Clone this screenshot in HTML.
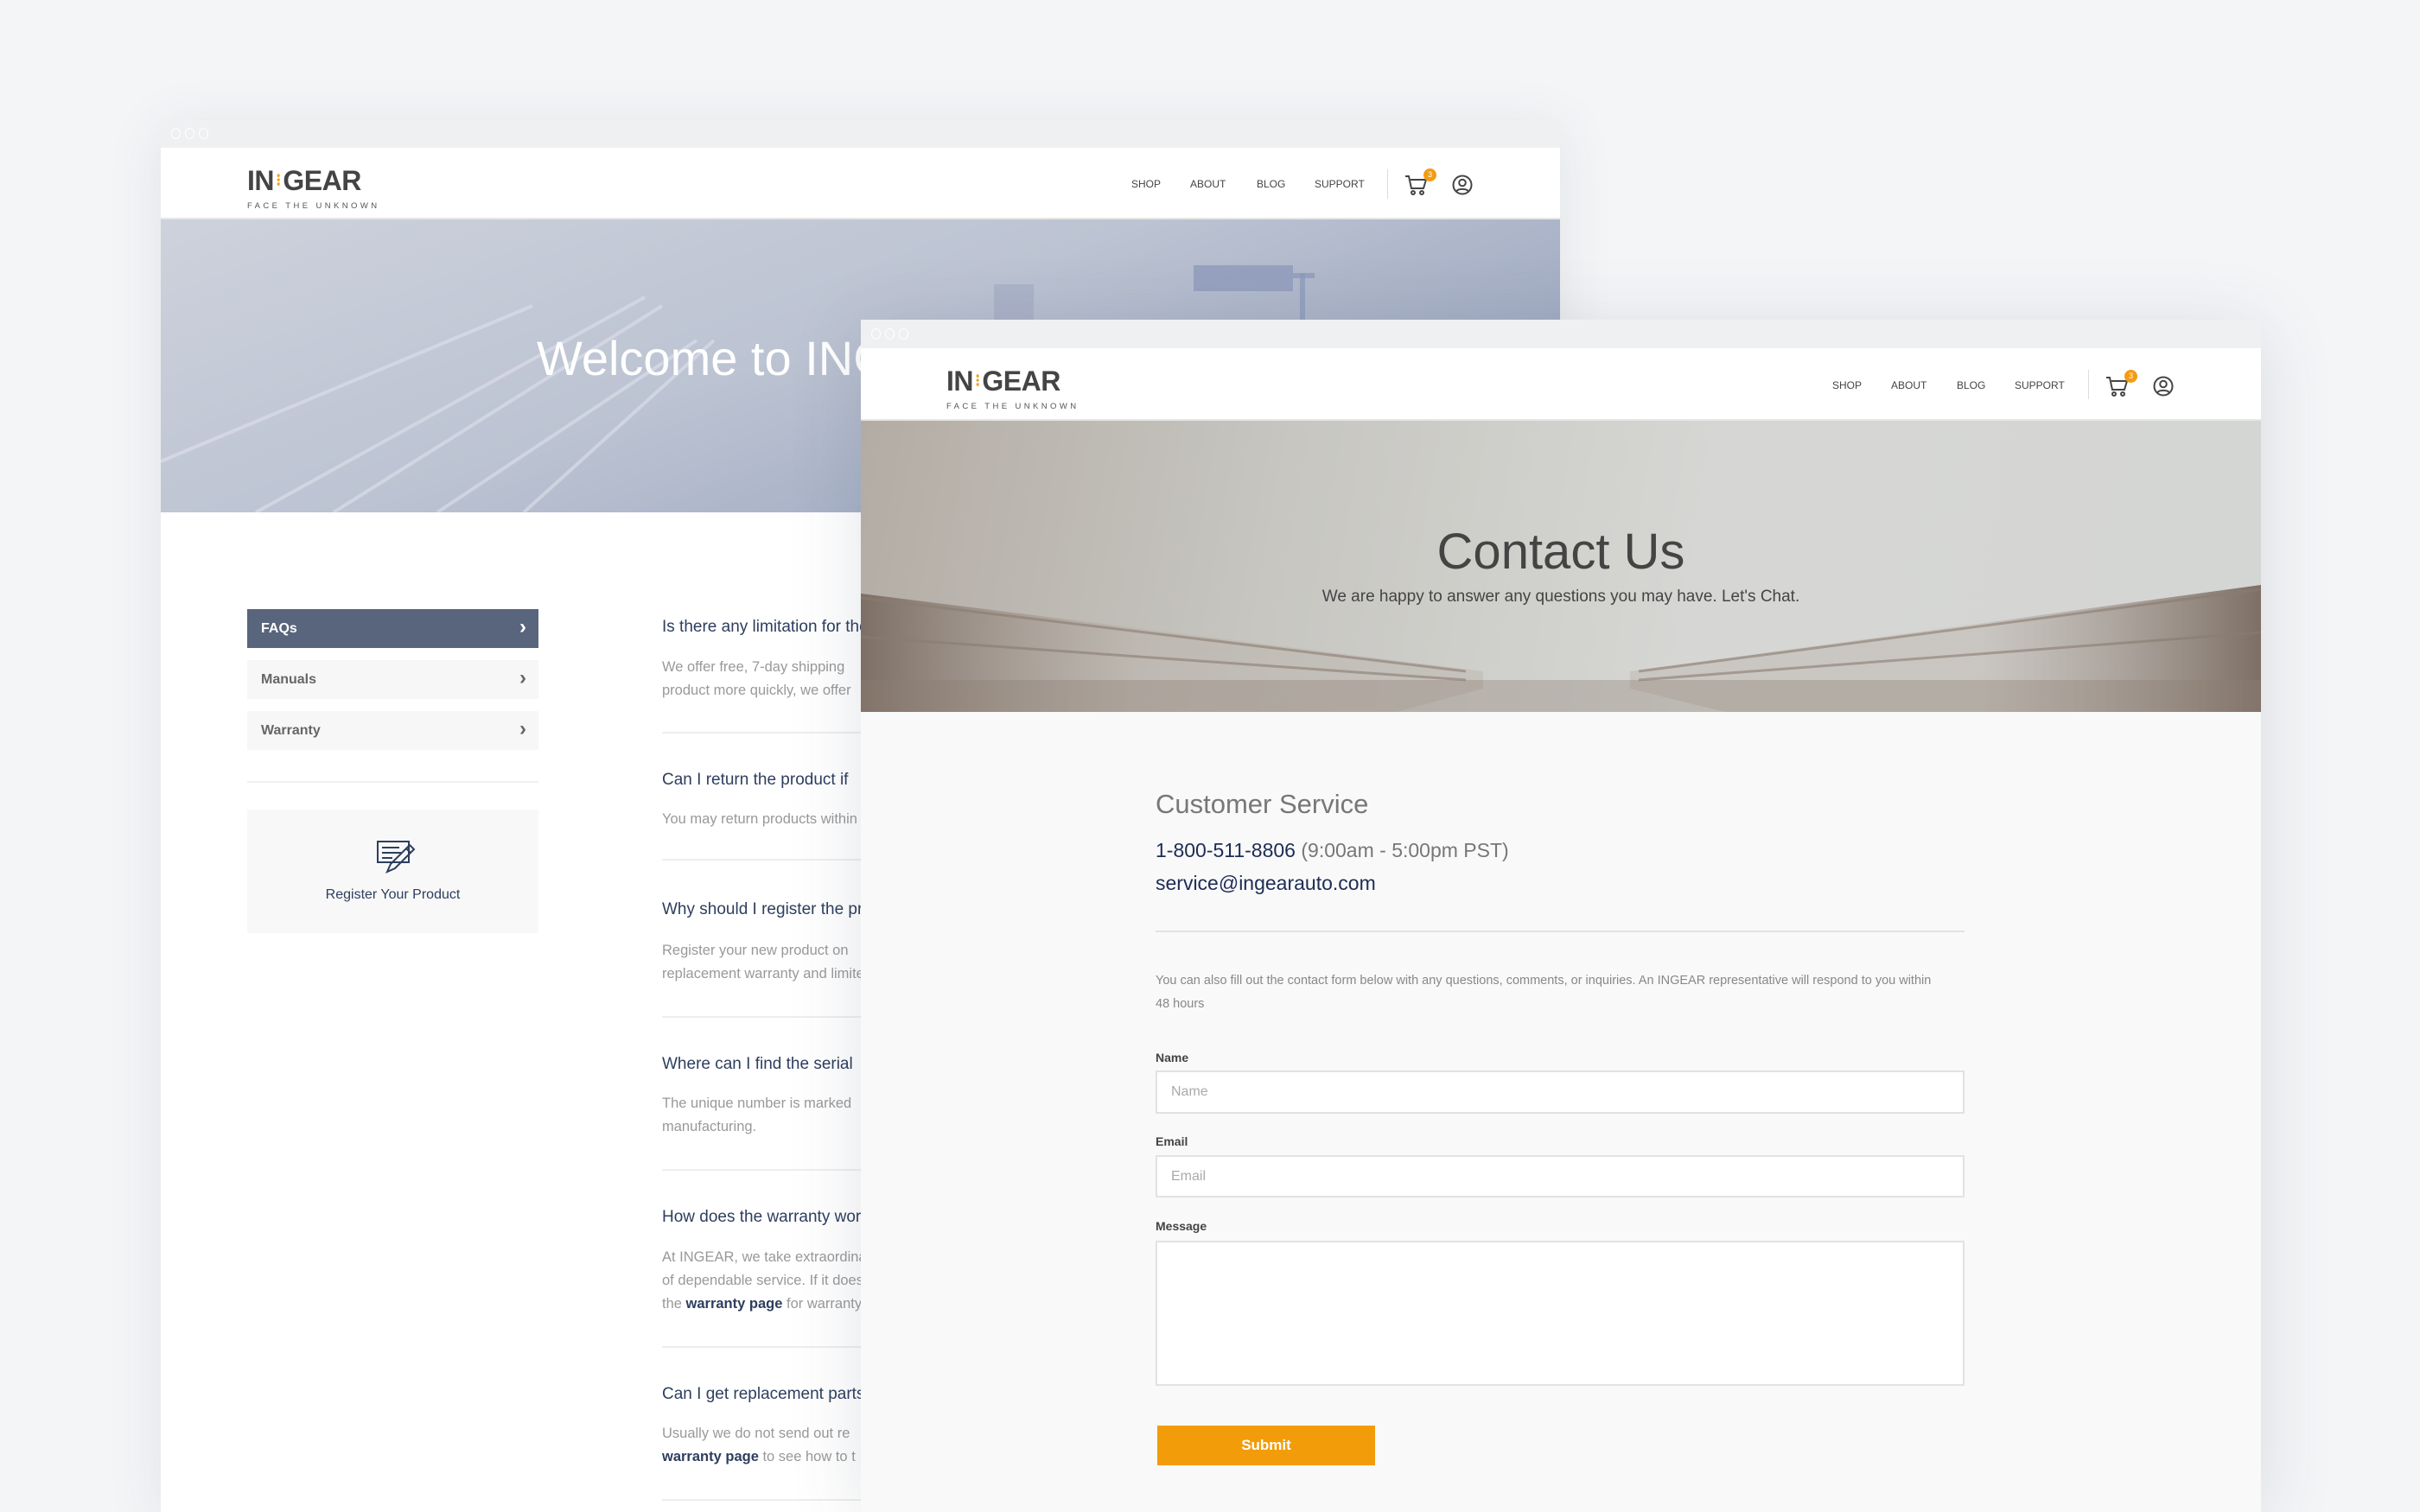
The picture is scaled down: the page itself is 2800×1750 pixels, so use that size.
<!DOCTYPE html>
<html><head><meta charset="utf-8">
<style>
*{margin:0;padding:0;box-sizing:border-box}
body{width:2800px;height:1750px;background:#f4f5f7;font-family:"Liberation Sans",sans-serif;position:relative;overflow:hidden}
.win{position:absolute;background:#fff;box-shadow:0 10px 60px rgba(60,70,90,.10)}
.bar{position:absolute;left:0;right:0;top:0;background:#eff0f2}
.dots{position:absolute;left:12px;display:flex;gap:5px}
.dots i{width:11px;height:13px;border:1.5px solid #fff;border-radius:50%;display:block}
.hdr{position:absolute;left:0;right:0;background:#fff;border-bottom:2px solid #e6e6e6}
.logo{position:absolute;color:#444}
.logo .big{font-weight:bold;font-size:32px;letter-spacing:-0.5px;line-height:32px;white-space:nowrap}
.logo .big b{color:#f39c12;font-size:20px;letter-spacing:0;position:relative;top:-5px;margin:0 2px}
.logo .sm{font-size:9.5px;letter-spacing:3.4px;color:#555;margin-top:3px;white-space:nowrap}
.nav{position:absolute;font-size:12px;color:#444;white-space:nowrap}
.nav span{position:absolute;top:0}
.vdiv{position:absolute;width:1px;height:34px;background:#ddd}
.badge{position:absolute;width:15px;height:15px;border-radius:50%;background:#f39c12;color:#fff;font-size:9px;text-align:center;line-height:15px}
.side{position:absolute;left:100px;width:337px;height:45px;background:#f7f7f7;font-size:16px;color:#666;font-weight:bold;padding-left:16px;line-height:45px}
.side::after{content:"›";position:absolute;right:14px;top:-2px;font-size:24px;font-weight:bold}
.q{position:absolute;left:580px;font-size:19px;color:#2d3e5e;white-space:nowrap}
.a{position:absolute;left:580px;font-size:16.5px;color:#999;line-height:27px;white-space:nowrap}
.a em{font-style:normal;color:#2d3e5e;font-weight:bold}
.hr{position:absolute;left:580px;width:300px;height:2px;background:#eee}
.lbl{position:absolute;left:341px;font-size:14px;font-weight:bold;color:#444}
.inp{position:absolute;left:341px;width:936px;background:#fff;border:2px solid #e2e2e2;font-size:16px;color:#aaa;padding-left:16px}
</style></head><body>

<!-- WINDOW 1 -->
<div class="win" style="left:186px;top:139px;width:1619px;height:1611px">
  <div class="bar" style="height:32px"><div class="dots" style="top:9px"><i></i><i></i><i></i></div></div>
  <div class="hdr" style="top:32px;height:83px">
    <div class="logo" style="left:100px;top:22px"><div class="big">IN<b>⁝</b>GEAR</div><div class="sm">FACE THE UNKNOWN</div></div>
    <div class="nav" style="left:1123px;top:35px;width:300px">
      <span style="left:0">SHOP</span><span style="left:68px">ABOUT</span><span style="left:145px">BLOG</span><span style="left:212px">SUPPORT</span>
    </div>
    <div class="vdiv" style="left:1419px;top:25px"></div>
    <svg style="position:absolute;left:1439px;top:30px" width="28" height="26" viewBox="0 0 28 26" fill="none" stroke="#444" stroke-width="2"><path d="M1 3h4l3 14h14l3-10H7"/><circle cx="10" cy="22" r="2"/><circle cx="20" cy="22" r="2"/></svg>
    <div class="badge" style="left:1461px;top:24px">3</div>
    <svg style="position:absolute;left:1494px;top:31px" width="24" height="24" viewBox="0 0 24 24" fill="none" stroke="#444" stroke-width="2"><circle cx="12" cy="12" r="10.5"/><circle cx="12" cy="9.5" r="3.8"/><path d="M5 19.5c2-3.5 12-3.5 14 0"/></svg>
  </div>
  <div style="position:absolute;top:115px;left:0;right:0;height:339px;background:linear-gradient(160deg,#cdd2dc 0%,#bcc3d2 45%,#8e9bb8 100%);overflow:hidden">
    <svg width="1619" height="339" style="position:absolute;left:0;top:0">
      <g stroke="#dde2ec" stroke-width="4" opacity=".6" fill="none">
        <path d="M110 339 L560 90"/><path d="M200 339 L580 100"/><path d="M320 339 L620 140"/><path d="M420 339 L640 140"/>
        <path d="M0 280 L430 100"/>
      </g>
      <rect x="1195" y="53" width="115" height="30" fill="#8e9bbb" opacity=".8"/>
      <rect x="1310" y="62" width="25" height="6" fill="#8e9bbb" opacity=".8"/>
      <rect x="1318" y="62" width="6" height="277" fill="#8e9bbb" opacity=".8"/>
      <rect x="964" y="75" width="46" height="264" fill="#a4adc5" opacity=".7"/>
    </svg>
    <div style="position:absolute;left:435px;top:128px;font-size:56px;color:#fff;font-weight:300;white-space:nowrap">Welcome to INGEAR</div>
  </div>
  <div style="position:absolute;top:454px;left:0;right:0;bottom:0;background:#fff">
    <div class="side" style="top:112px;background:#58657c;color:#fff">FAQs</div>
    <div class="side" style="top:171px">Manuals</div>
    <div class="side" style="top:230px">Warranty</div>
    <div style="position:absolute;left:100px;top:311px;width:337px;height:2px;background:#f0f0f0"></div>
    <div style="position:absolute;left:100px;top:344px;width:337px;height:143px;background:#f8f8f8">
      <svg style="position:absolute;left:150px;top:36px" width="50" height="38" viewBox="0 0 50 38" fill="none" stroke="#2d3e5e" stroke-width="2"><rect x="1" y="1" width="36" height="24"/><path d="M6 8h20M6 14h22M6 20h12"/><path d="M12 36l4-9 22-22 5 5-22 22z"/><path d="M34 9l5 5"/></svg>
      <div style="position:absolute;left:0;right:0;top:90px;text-align:center;font-size:16px;color:#2d3e5e">Register Your Product</div>
    </div>
    <div class="q" style="top:122px">Is there any limitation for the shipping?</div>
    <div class="a" style="top:166px">We offer free, 7-day shipping<br>product more quickly, we offer</div>
    <div class="hr" style="top:254px"></div>
    <div class="q" style="top:299px">Can I return the product if</div>
    <div class="a" style="top:342px">You may return products within</div>
    <div class="hr" style="top:401px"></div>
    <div class="q" style="top:449px">Why should I register the product?</div>
    <div class="a" style="top:494px">Register your new product on<br>replacement warranty and limited</div>
    <div class="hr" style="top:583px"></div>
    <div class="q" style="top:628px">Where can I find the serial</div>
    <div class="a" style="top:671px">The unique number is marked<br>manufacturing.</div>
    <div class="hr" style="top:760px"></div>
    <div class="q" style="top:805px">How does the warranty work?</div>
    <div class="a" style="top:849px">At INGEAR, we take extraordinary<br>of dependable service. If it does<br>the <em>warranty page</em> for warranty</div>
    <div class="hr" style="top:965px"></div>
    <div class="q" style="top:1010px">Can I get replacement parts?</div>
    <div class="a" style="top:1053px">Usually we do not send out re<br><em>warranty page</em> to see how to t</div>
    <div class="hr" style="top:1142px"></div>
  </div>
</div>

<!-- WINDOW 2 -->
<div class="win" style="left:996px;top:370px;width:1620px;height:1380px;background:#f9f9f9;box-shadow:0 10px 80px rgba(60,70,90,.14)">
  <div class="bar" style="height:33px"><div class="dots" style="top:10px"><i></i><i></i><i></i></div></div>
  <div class="hdr" style="top:33px;height:84px">
    <div class="logo" style="left:99px;top:22px"><div class="big">IN<b>⁝</b>GEAR</div><div class="sm">FACE THE UNKNOWN</div></div>
    <div class="nav" style="left:1124px;top:36px;width:300px">
      <span style="left:0">SHOP</span><span style="left:68px">ABOUT</span><span style="left:144px">BLOG</span><span style="left:211px">SUPPORT</span>
    </div>
    <div class="vdiv" style="left:1420px;top:25px"></div>
    <svg style="position:absolute;left:1440px;top:31px" width="28" height="26" viewBox="0 0 28 26" fill="none" stroke="#444" stroke-width="2"><path d="M1 3h4l3 14h14l3-10H7"/><circle cx="10" cy="22" r="2"/><circle cx="20" cy="22" r="2"/></svg>
    <div class="badge" style="left:1462px;top:25px">3</div>
    <svg style="position:absolute;left:1495px;top:32px" width="24" height="24" viewBox="0 0 24 24" fill="none" stroke="#444" stroke-width="2"><circle cx="12" cy="12" r="10.5"/><circle cx="12" cy="9.5" r="3.8"/><path d="M5 19.5c2-3.5 12-3.5 14 0"/></svg>
  </div>
  <div style="position:absolute;top:117px;left:0;right:0;height:337px;background:linear-gradient(100deg,#b3aca4 0%,#c7c6c1 30%,#d6d7d4 60%,#d4d6d4 100%);overflow:hidden">
    <svg width="1620" height="337" style="position:absolute;left:0;top:0">
      <defs>
        <linearGradient id="lg" x1="0" x2="1"><stop offset="0" stop-color="#7d6f65"/><stop offset=".45" stop-color="#b8aea6" stop-opacity=".4"/></linearGradient>
        <linearGradient id="rg" x1="1" x2="0"><stop offset="0" stop-color="#7d6f65"/><stop offset=".45" stop-color="#b8aea6" stop-opacity=".4"/></linearGradient>
      </defs>
      <polygon points="0,200 720,290 720,310 620,337 0,337" fill="url(#lg)"/>
      <polygon points="1620,190 890,290 890,310 1000,337 1620,337" fill="url(#rg)"/>
      <g stroke="#8a7c70" stroke-width="3" opacity=".6">
        <path d="M0 205 L700 290"/><path d="M0 250 L700 300"/>
        <path d="M1620 195 L900 290"/><path d="M1620 245 L900 300"/>
      </g>
      <rect x="0" y="300" width="1620" height="37" fill="#8c7d74" opacity=".35"/>
    </svg>
    <div style="position:absolute;left:0;right:0;top:118px;text-align:center;font-size:58px;color:#444;font-weight:300">Contact Us</div>
    <div style="position:absolute;left:0;right:0;top:193px;text-align:center;font-size:19px;color:#444">We are happy to answer any questions you may have. Let's Chat.</div>
  </div>
  <div style="position:absolute;left:341px;top:543px;font-size:31px;color:#777">Customer Service</div>
  <div style="position:absolute;left:341px;top:601px;font-size:23px;color:#777;white-space:nowrap"><span style="color:#1e2c55">1-800-511-8806</span> (9:00am - 5:00pm PST)</div>
  <div style="position:absolute;left:341px;top:639px;font-size:23px;color:#1e2c55">service@ingearauto.com</div>
  <div style="position:absolute;left:341px;top:707px;width:936px;height:2px;background:#e2e2e2"></div>
  <div style="position:absolute;left:341px;top:752px;width:900px;font-size:14.5px;line-height:27px;color:#888">You can also fill out the contact form below with any questions, comments, or inquiries. An INGEAR representative will respond to you within 48 hours</div>
  <div class="lbl" style="top:846px">Name</div>
  <div class="inp" style="top:869px;height:50px;line-height:46px">Name</div>
  <div class="lbl" style="top:943px">Email</div>
  <div class="inp" style="top:967px;height:49px;line-height:45px">Email</div>
  <div class="lbl" style="top:1041px">Message</div>
  <div class="inp" style="top:1066px;height:168px"></div>
  <div style="position:absolute;left:343px;top:1280px;width:252px;height:46px;background:#f39c0a;color:#fff;font-weight:bold;font-size:17px;text-align:center;line-height:46px">Submit</div>
</div>
</body></html>
